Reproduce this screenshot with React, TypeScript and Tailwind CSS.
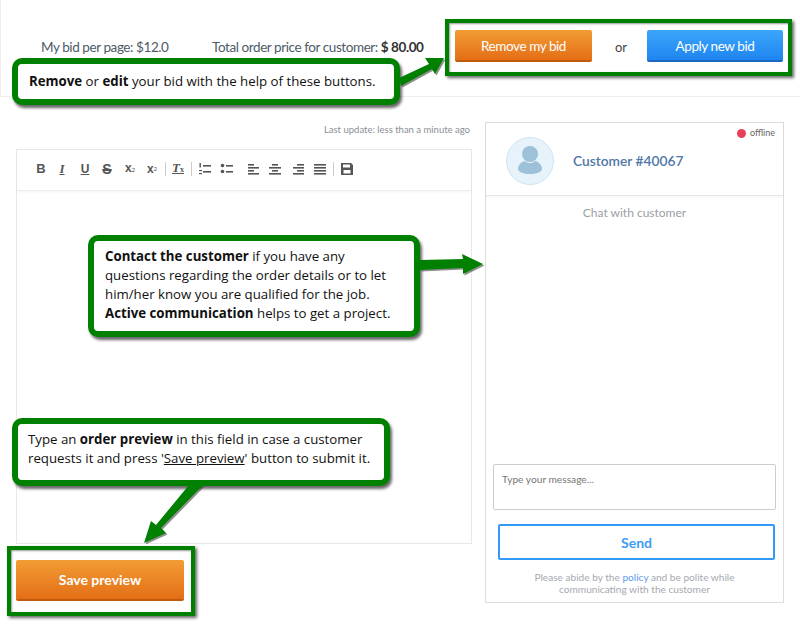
const lato = "font-['Lato','Liberation_Sans',sans-serif]";

function Callout({ className, children }: { className: string; children: React.ReactNode }) {
  return (
    <div
      className={`absolute z-20 rounded-[10px] border-[6px] border-[#008000] bg-white text-[#111] shadow-[2px_3px_3px_rgba(0,0,0,0.6)] font-['Open_Sans','Noto_Sans',sans-serif] text-[13.25px] leading-[19px] ${className}`}
    >
      {children}
    </div>
  );
}

function GreenBox({ className }: { className: string }) {
  return (
    <div
      className={`absolute z-10 border-[4px] border-[#008000] shadow-[2px_2px_3px_rgba(0,0,0,0.6),inset_1px_1px_2px_rgba(0,0,0,0.4)] ${className}`}
    />
  );
}

function Arrow({ className, w, h, d }: { className: string; w: number; h: number; d: string }) {
  return (
    <svg className={`absolute z-20 ${className}`} width={w} height={h} viewBox={`0 0 ${w} ${h}`}>
      <path d={d} fill="#333" opacity="0.55" transform="translate(1.5 1.5)" />
      <path d={d} fill="#008000" />
    </svg>
  );
}

function ToolIcon({ children }: { children: React.ReactNode }) {
  return (
    <svg width="14" height="14" viewBox="0 0 14 14" fill="#555" className="block shrink-0">
      {children}
    </svg>
  );
}

function Lines({ rows }: { rows: [number, number][] }) {
  return (
    <ToolIcon>
      {rows.map(([x, w], i) => (
        <rect key={i} x={x} y={2 + i * 3} width={w} height="1.6" />
      ))}
    </ToolIcon>
  );
}

function Sep() {
  return <span className="block h-[14px] w-px bg-[#ccc] shrink-0" />;
}

function Toolbar() {
  return (
    <div className="h-[41px] flex items-center pl-[17px] pb-[2px] border-b border-[#eee] shadow-[0_1px_2px_rgba(0,0,0,0.05)] text-[#555] leading-[14px]">
      <span className="w-[14px] text-center font-bold text-[13px] font-['Liberation_Sans',sans-serif]">B</span>
      <span className="ml-[7px] w-[14px] text-center italic font-bold text-[13px] font-['Liberation_Serif',serif] underline decoration-1">I</span>
      <span className="ml-[9px] w-[14px] text-center font-bold text-[12px] underline font-['Liberation_Sans',sans-serif]">U</span>
      <span className="ml-[8px] w-[14px] text-center font-bold text-[14px] line-through decoration-2 font-['Liberation_Sans',sans-serif]">S</span>
      <span className="ml-[9px] w-[14px] text-center font-bold text-[12px] font-['Liberation_Sans',sans-serif]">x<span className="text-[6px] font-normal">2</span></span>
      <span className="ml-[8px] w-[14px] text-center font-bold text-[12px] font-['Liberation_Sans',sans-serif]">x<span className="text-[6px] font-normal align-top">2</span></span>
      <span className="ml-[6px]"><Sep /></span>
      <span className="ml-[5px] w-[14px] text-center italic font-bold text-[13px] underline font-['Liberation_Serif',serif]">T<span className="text-[8px] not-italic">x</span></span>
      <span className="ml-[6px]"><Sep /></span>
      <span className="ml-[6px]">
        <ToolIcon>
          <rect x="5" y="3" width="8" height="1.6" />
          <rect x="5" y="9" width="8" height="1.6" />
          <rect x="1.500" y="1" width="1.4" height="4.500" />
          <rect x="1" y="8" width="3" height="1.2" />
          <rect x="1" y="11" width="3" height="1.2" />
        </ToolIcon>
      </span>
      <span className="ml-[8px]">
        <ToolIcon>
          <circle cx="2.5" cy="3.500" r="1.8" />
          <circle cx="2.5" cy="9.500" r="1.8" />
          <rect x="6" y="3" width="7" height="1.6" />
          <rect x="6" y="9" width="7" height="1.6" />
        </ToolIcon>
      </span>
      <span className="ml-[12px]"><Lines rows={[[2, 6], [2, 11], [2, 6], [2, 11]]} /></span>
      <span className="ml-[8px]"><Lines rows={[[4, 6], [1, 12], [4, 6], [1, 12]]} /></span>
      <span className="ml-[9px]"><Lines rows={[[6, 7], [2, 11], [6, 7], [2, 11]]} /></span>
      <span className="ml-[8px]"><Lines rows={[[1, 12], [1, 12], [1, 12], [1, 12]]} /></span>
      <span className="ml-[6px]"><Sep /></span>
      <span className="ml-[6px]">
        <ToolIcon>
          <path d="M1 1h10l2 2v10H1z M3 2.500v3h7v-3z M3.500 8v3.500h7V8z" fillRule="evenodd" />
        </ToolIcon>
      </span>
    </div>
  );
}

function OrangeButton({ className, children }: { className: string; children: React.ReactNode }) {
  return (
    <button className={`rounded-[2px] border-b-[2px] border-[#c25a0c] bg-gradient-to-b from-[#f19c33] to-[#e46e16] text-white text-center ${className}`}>
      {children}
    </button>
  );
}

export default function App() {
  return (
    <div className={`relative w-[800px] h-[634px] bg-white overflow-hidden ${lato}`}>
      {/* bid bar */}
      <div className="h-[97px] border-b border-l border-[#eee] pt-[30px] flex">
        <div className="w-[454px] shrink-0 flex h-[32px] pt-[2px] items-center text-[13.5px] tracking-[-0.42px] text-[#4d5a66] whitespace-nowrap">
          <span className="ml-[40px] w-[171px]">My bid per page: $12.0</span>
          <span>
            Total order price for customer: <span className="font-bold text-[#333]">$ 80.00</span>
          </span>
        </div>
        <OrangeButton className="w-[137px] h-[32px] pt-[2px] text-[13.5px] tracking-[-0.42px]">Remove my bid</OrangeButton>
        <span className="ml-[23px] w-[32px] pt-[1px] leading-[32px] text-[13px] text-[#444]">or</span>
        <button className="w-[136px] h-[32px] pt-[2px] rounded-[2px] border-b-[2px] border-[#1a68c0] bg-gradient-to-b from-[#3ba6fb] to-[#1f85f0] text-white text-[13.5px] tracking-[-0.42px]">
          Apply new bid
        </button>
      </div>

      <div className="flex pl-[16px] pt-[25px]">
        {/* editor */}
        <div className="w-[456px]">
          <div className="h-[27px] pr-[2px] pt-[1px] text-right text-[9.5px] leading-[14px] text-[#8a8f96]">
            Last update: less than a minute ago
          </div>
          <div className="h-[395px] border border-[#e8e8e8]">
            <Toolbar />
          </div>
          <OrangeButton className="mt-[16px] w-[168px] h-[41px] font-bold text-[14px]">Save preview</OrangeButton>
        </div>

        {/* chat */}
        <div className="ml-[13px] w-[299px] h-[481px] border border-[#ddd] flex flex-col">
          <div className="relative h-[73px] pt-[4px] border-b border-[#e6e6e6] shadow-[0_1px_2px_rgba(0,0,0,0.04)] flex items-center pl-[20px]">
            <div className="w-[48px] h-[48px] rounded-full border border-[#cfe4f2] bg-[#e6f3fb] flex items-center justify-center">
              <svg width="26" height="32" viewBox="0 0 26 32" fill="#9cc1d8">
                <circle cx="13" cy="9" r="8" />
                <path d="M1 24c0-5 5-8 7-8 1.500 1.500 3 2 5 2s3.500-.5 5-2c2 0 7 3 7 8 0 3-6 5-12 5S1 27 1 24z" />
              </svg>
            </div>
            <span className="ml-[19px] text-[13.75px] font-semibold text-[#4f78a6]">Customer #40067</span>
            <div className="absolute right-[8px] top-[4px] flex items-center gap-[4px] text-[9px] leading-[12px] text-[#666]">
              <span className="w-[9px] h-[9px] rounded-full bg-[#e8405a]" />
              offline
            </div>
          </div>
          <div className="mt-[9px] text-center text-[12px] leading-[16px] text-[#9a9fa5]">Chat with customer</div>
          <div className="flex-1" />
          <div className="mx-[7px] h-[46px] rounded-[2px] border border-[#ccc] px-[8px] py-[7px] text-[10.2px] leading-[14px] text-[#777]">
            Type your message...
          </div>
          <button className="ml-[12px] mr-[8px] mt-[14px] h-[36px] rounded-[2px] border-2 border-[#3399fb] text-[14px] font-bold text-[#3d9bf5]">
            Send
          </button>
          <div className="mt-[11px] mb-[7px] text-center text-[10.1px] leading-[12px] text-[#a5a9b0]">
            <div>
              Please abide by the <span className="text-[#5a9bea]">policy</span> and be polite while
            </div>
            <div>communicating with the customer</div>
          </div>
        </div>
      </div>

      {/* annotations */}
      <GreenBox className="left-[445px] top-[19px] w-[347px] h-[57px]" />
      <GreenBox className="left-[7px] top-[546px] w-[188px] h-[70px]" />

      <Callout className="left-[12px] top-[58px] w-[388px] h-[47px] pl-[11px] pt-[8px] whitespace-nowrap">
        <b>Remove</b> or <b>edit</b> your bid with the help of these buttons.
      </Callout>
      <Callout className="left-[88px] top-[235px] w-[332px] h-[102px] pl-[11px] pt-[6px] whitespace-nowrap">
        <b>Contact the customer</b> if you have any<br />
        questions regarding the order details or to let<br />
        him/her know you are qualified for the job.<br />
        <b>Active communication</b> helps to get a project.
      </Callout>
      <Callout className="left-[12px] top-[418px] w-[378px] h-[68px] pl-[10px] pt-[6px] whitespace-nowrap">
        Type an <b>order preview</b> in this field in case a customer<br />
        requests it and press '<u>Save preview</u>' button to submit it.
      </Callout>

      <Arrow className="left-[398px] top-[54px]" w={48} h={34} d="M1 24 L31 10 L27 4 L46 4 L37 20 L34 15 L3 32 Z" />
      <Arrow className="left-[419px] top-[253px]" w={66} h={24} d="M1 7 L44 6 L43 1 L64 11 L44 21 L44 15 L1 17 Z" />
      <Arrow className="left-[143px] top-[484px]" w={64} h={60} d="M46 1 L60 1 L18 44 L23 49 L1 59 L8 37 L13 41 Z" />
    </div>
  );
}
